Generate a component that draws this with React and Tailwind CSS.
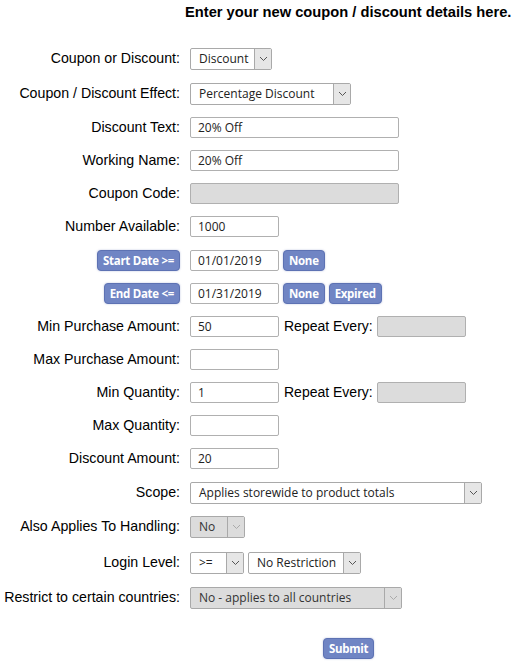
import React from 'react';

const Chevron = () => (
  <svg width="9" height="6" viewBox="0 0 9 6" fill="none" stroke="currentColor" strokeWidth="1">
    <path d="M1 1l3.5 3.5L8 1" />
  </svg>
);

const Select = ({ value, width, disabled }) => (
  <div
    className={`flex h-[22px] items-center justify-between rounded-[2px] border border-[#a9a9a9] ${disabled ? 'bg-[#dcdcdc] text-[#333]' : 'bg-white text-[#222]'}`}
    style={{ width }}
  >
    <span className="pl-[8px] text-[12px] font-['Open_Sans',sans-serif]">{value}</span>
    <span className={`flex h-full w-[17px] items-center justify-center border-l border-[#a9a9a9] ${disabled ? 'bg-[#dcdcdc] text-[#aaa]' : 'bg-[#e6e6e6] text-[#555]'}`}>
      <Chevron />
    </span>
  </div>
);

const Input = ({ value = '', width = 89, disabled }) => (
  <div
    className={`flex h-[21px] items-center rounded-[2px] border border-[#b0b0b0] pl-[7px] text-[12px] text-[#222] font-['Open_Sans',sans-serif] ${disabled ? 'bg-[#dcdcdc]' : 'bg-white'}`}
    style={{ width }}
  >
    {value}
  </div>
);

const Btn = ({ children }) => (
  <div className="flex h-[21px] items-center rounded-[4px] border border-[#5d72b3] bg-[#7085c4] px-[5px] text-[11.5px] font-bold tracking-[-0.3px] text-white font-['Open_Sans',sans-serif] shadow-[0_0_2px_rgba(80,100,170,0.4)]">
    {children}
  </div>
);

const Row = ({ label, children, className = '' }) => (
  <div className={`flex h-[33px] items-center ${className}`}>
    <div className="flex w-[180px] shrink-0 justify-end text-[14.2px] text-black">{label}</div>
    <div className="ml-[10px] flex items-center gap-[4px]">{children}</div>
  </div>
);

export default function App() {
  return (
    <div className="h-[662px] w-[518px] bg-white font-['Liberation_Sans',Arial,sans-serif]">
      <div className="pt-[3px] pl-[185px] text-[14.7px] font-bold leading-[18px] text-black">
        Enter your new coupon / discount details here.
      </div>
      <div className="mt-[21px]">
        <Row label="Coupon or Discount:"><Select value="Discount" width={82} /></Row>
        <Row label="Coupon / Discount Effect:" className="mt-[2px]"><Select value="Percentage Discount" width={161} /></Row>
        <Row label="Discount Text:" className="mt-[1px]"><Input value="20% Off" width={209} /></Row>
        <Row label="Working Name:"><Input value="20% Off" width={209} /></Row>
        <Row label="Coupon Code:"><Input width={209} disabled /></Row>
        <Row label="Number Available:"><Input value="1000" width={89} /></Row>
        <Row label={<Btn>Start Date &gt;=</Btn>} className="mt-[1px]">
          <Input value="01/01/2019" width={89} />
          <Btn>None</Btn>
        </Row>
        <Row label={<Btn>End Date &lt;=</Btn>}>
          <Input value="01/31/2019" width={89} />
          <Btn>None</Btn>
          <Btn>Expired</Btn>
        </Row>
        <Row label="Min Purchase Amount:">
          <Input value="50" width={89} />
          <span className="ml-[1px] text-[14px]">Repeat Every:</span>
          <Input width={89} disabled />
        </Row>
        <Row label="Max Purchase Amount:"><Input width={89} /></Row>
        <Row label="Min Quantity:">
          <Input value="1" width={89} />
          <span className="ml-[1px] text-[14px]">Repeat Every:</span>
          <Input width={89} disabled />
        </Row>
        <Row label="Max Quantity:"><Input width={89} /></Row>
        <Row label="Discount Amount:"><Input value="20" width={89} /></Row>
        <Row label="Scope:" className="mt-[1px]"><Select value="Applies storewide to product totals" width={292} /></Row>
        <Row label="Also Applies To Handling:" className="mt-[1px]"><Select value="No" width={55} disabled /></Row>
        <Row label="Login Level:" className="mt-[3px]">
          <Select value=">=" width={54} />
          <Select value="No Restriction" width={113} />
        </Row>
        <Row label="Restrict to certain countries:" className="mt-[2px]"><Select value="No - applies to all countries" width={212} disabled /></Row>
        <div className="mt-[24px] flex pl-[323px]">
          <Btn>Submit</Btn>
        </div>
      </div>
    </div>
  );
}
